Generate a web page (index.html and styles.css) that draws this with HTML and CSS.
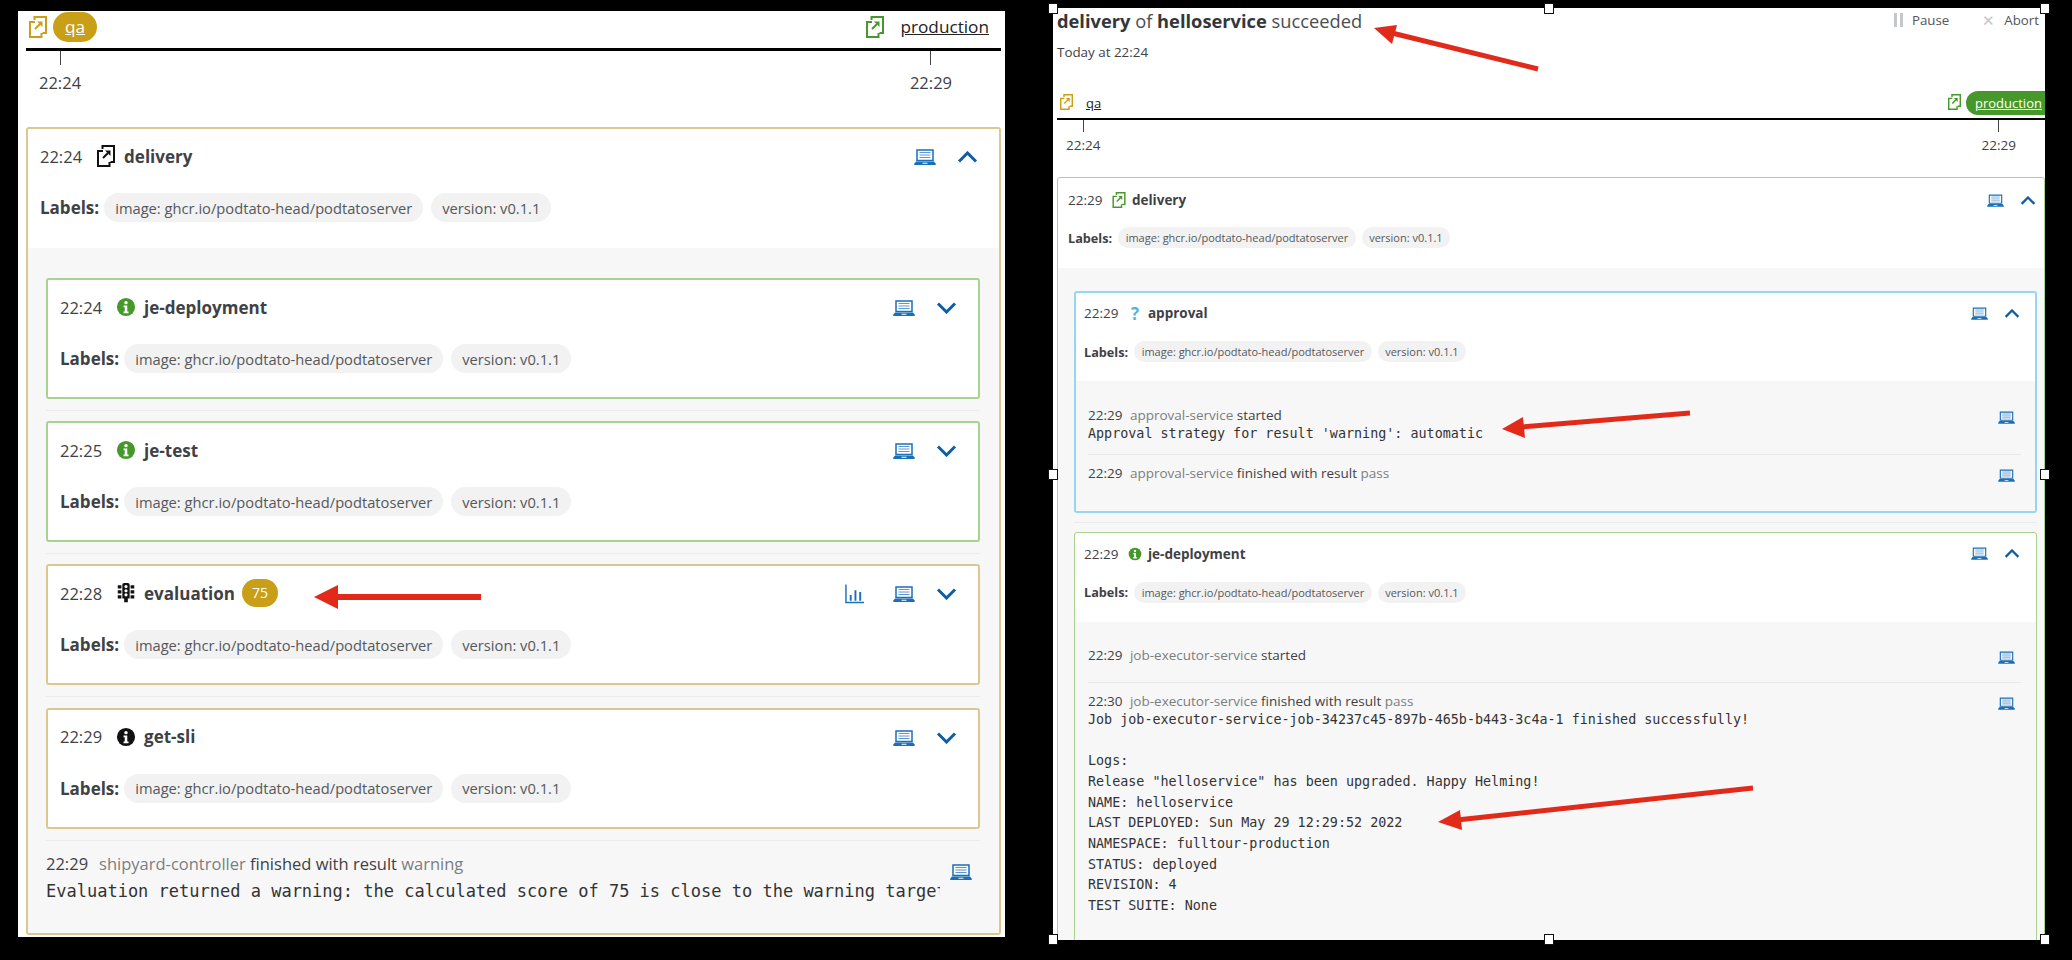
FILE: index.html
```html
<!DOCTYPE html>
<html lang="en">
<head>
    <meta charset="UTF-8">
    <title>Sequence comparison</title>
    <link rel="stylesheet" href="styles.css">
</head>
<body>
    <svg class="defs" width="0" height="0">
        <symbol id="i-deploy" viewBox="0 0 18 22">
            <path d="M5.500 4V1H17v16h-3.500M6 6H1v15h11.500v-4M6 13L11 8" fill="none" stroke="currentColor" stroke-width="2"/>
            <path d="M8 5.500h5.500V11z" fill="currentColor"/>
        </symbol>
        <symbol id="i-info" viewBox="-1 -1 22 22">
            <circle cx="10" cy="10" r="10" fill="currentColor"/>
            <circle cx="10" cy="5.200" r="1.900" fill="#fff"/>
            <path d="M7.300 8.300h4.100v6.600h1.400v2H7.300v-2h1.300v-4.600H7.300z" fill="#fff"/>
        </symbol>
        <symbol id="i-traffic" viewBox="-1 -1 20 24">
            <path d="M5 2a2 2 0 0 1 2-2h4a2 2 0 0 1 2 2v15h-2v4H7v-4H5zM0 2.500h4v3.500H0zM14 2.500h4v3.500h-4zM0 8h4v3.500H0zM14 8h4v3.500h-4zM0 13.500h4V17H0zM14 13.500h4V17h-4z" fill="currentColor"/>
            <circle cx="9" cy="4" r="1.700" fill="#fff"/>
            <circle cx="9" cy="8.500" r="1.700" fill="#fff"/>
            <circle cx="9" cy="13" r="1.700" fill="#fff"/>
        </symbol>
        <symbol id="i-laptop" viewBox="0 0 22 16">
            <path d="M3 1h16v10.500H3z" fill="none" stroke="currentColor" stroke-width="1.500"/>
            <path d="M5.500 3.500h11M5.500 6h11M5.500 8.500h11" stroke="currentColor" stroke-width="1" opacity=".7"/>
            <path d="M2 12.500h18l2 2.500a1 1 0 0 1-1 1H1a1 1 0 0 1-1-1zM8.500 13.800v.9h5v-.9z" fill="currentColor" fill-rule="evenodd"/>
        </symbol>
        <symbol id="i-chart" viewBox="0 0 20 20">
            <path d="M1 0v19h19" fill="none" stroke="currentColor" stroke-width="1.500"/>
            <path d="M5 11h2v6H5zM10 6h2v11h-2zM15 8h2v9h-2z" fill="currentColor"/>
        </symbol>
        <symbol id="i-up" viewBox="0 0 21 12">
            <path d="M2 10.500L10.500 2L19 10.500" fill="none" stroke="currentColor" stroke-width="3"/>
        </symbol>
        <symbol id="i-down" viewBox="0 0 21 12">
            <path d="M2 1.500L10.500 10L19 1.500" fill="none" stroke="currentColor" stroke-width="3"/>
        </symbol>
    </svg>

    <div class="panel left">
        <div class="timeline">
            <div class="stages">
                <div class="stage">
                    <svg class="stage-icon warn"><use href="#i-deploy"/></svg>
                    <a class="stage-name badge-warn">qa</a>
                </div>
                <div class="stage">
                    <svg class="stage-icon ok"><use href="#i-deploy"/></svg>
                    <a class="stage-name">production</a>
                </div>
            </div>
            <div class="ticks">
                <div class="tick"><i></i><span>22:24</span></div>
                <div class="tick"><i></i><span>22:29</span></div>
            </div>
        </div>

        <div class="card outer border-warn">
            <div class="card-head">
                <div class="head-row">
                    <span class="time">22:24</span>
                    <svg class="task-icon"><use href="#i-deploy"/></svg>
                    <b class="task">delivery</b>
                    <div class="actions">
                        <svg class="laptop"><use href="#i-laptop"/></svg>
                        <svg class="chevron"><use href="#i-up"/></svg>
                    </div>
                </div>
                <div class="labels">
                    <b>Labels:</b>
                    <span class="chip">image: ghcr.io/podtato-head/podtatoserver</span>
                    <span class="chip">version: v0.1.1</span>
                </div>
            </div>
            <div class="card-body">
                <div class="item">
                    <div class="card border-ok">
                        <div class="card-head">
                            <div class="head-row">
                                <span class="time">22:24</span>
                                <svg class="task-icon ok"><use href="#i-info"/></svg>
                                <b class="task">je-deployment</b>
                                <div class="actions">
                                    <svg class="laptop"><use href="#i-laptop"/></svg>
                                    <svg class="chevron"><use href="#i-down"/></svg>
                                </div>
                            </div>
                            <div class="labels">
                                <b>Labels:</b>
                                <span class="chip">image: ghcr.io/podtato-head/podtatoserver</span>
                                <span class="chip">version: v0.1.1</span>
                            </div>
                        </div>
                    </div>
                </div>
                <div class="item">
                    <div class="card border-ok">
                        <div class="card-head">
                            <div class="head-row">
                                <span class="time">22:25</span>
                                <svg class="task-icon ok"><use href="#i-info"/></svg>
                                <b class="task">je-test</b>
                                <div class="actions">
                                    <svg class="laptop"><use href="#i-laptop"/></svg>
                                    <svg class="chevron"><use href="#i-down"/></svg>
                                </div>
                            </div>
                            <div class="labels">
                                <b>Labels:</b>
                                <span class="chip">image: ghcr.io/podtato-head/podtatoserver</span>
                                <span class="chip">version: v0.1.1</span>
                            </div>
                        </div>
                    </div>
                </div>
                <div class="item">
                    <div class="card border-warn">
                        <div class="card-head">
                            <div class="head-row">
                                <span class="time">22:28</span>
                                <svg class="task-icon"><use href="#i-traffic"/></svg>
                                <b class="task">evaluation</b>
                                <span class="score">75</span>
                                <div class="actions">
                                    <svg class="chart"><use href="#i-chart"/></svg>
                                    <svg class="laptop"><use href="#i-laptop"/></svg>
                                    <svg class="chevron"><use href="#i-down"/></svg>
                                </div>
                            </div>
                            <div class="labels">
                                <b>Labels:</b>
                                <span class="chip">image: ghcr.io/podtato-head/podtatoserver</span>
                                <span class="chip">version: v0.1.1</span>
                            </div>
                        </div>
                    </div>
                </div>
                <div class="item">
                    <div class="card border-warn">
                        <div class="card-head">
                            <div class="head-row">
                                <span class="time">22:29</span>
                                <svg class="task-icon"><use href="#i-info"/></svg>
                                <b class="task">get-sli</b>
                                <div class="actions">
                                    <svg class="laptop"><use href="#i-laptop"/></svg>
                                    <svg class="chevron"><use href="#i-down"/></svg>
                                </div>
                            </div>
                            <div class="labels">
                                <b>Labels:</b>
                                <span class="chip">image: ghcr.io/podtato-head/podtatoserver</span>
                                <span class="chip">version: v0.1.1</span>
                            </div>
                        </div>
                    </div>
                </div>
                <div class="log">
                    <div class="log-text">
                        <div class="log-line"><span class="time">22:29</span><span class="svc">shipyard-controller</span> finished with result <span class="svc-result">warning</span></div>
                        <pre>Evaluation returned a warning: the calculated score of 75 is close to the warning target score</pre>
                    </div>
                    <svg class="laptop"><use href="#i-laptop"/></svg>
                </div>
            </div>
        </div>
    </div>

    <div class="panel right">
        <div class="title-row">
            <div class="title"><b>delivery</b> of <b>helloservice</b> succeeded</div>
            <div class="controls">
                <span class="control"><i class="pause"></i>Pause</span>
                <span class="control"><i class="abort">✕</i>Abort</span>
            </div>
        </div>
        <div class="subtitle">Today at 22:24</div>

        <div class="timeline">
            <div class="stages">
                <div class="stage">
                    <svg class="stage-icon warn"><use href="#i-deploy"/></svg>
                    <a class="stage-name">qa</a>
                </div>
                <div class="stage">
                    <svg class="stage-icon ok"><use href="#i-deploy"/></svg>
                    <a class="stage-name badge-ok">production</a>
                </div>
            </div>
            <div class="ticks">
                <div class="tick"><i></i><span>22:24</span></div>
                <div class="tick"><i></i><span>22:29</span></div>
            </div>
        </div>

        <div class="card outer border-ok">
            <div class="card-head">
                <div class="head-row">
                    <span class="time">22:29</span>
                    <svg class="task-icon ok"><use href="#i-deploy"/></svg>
                    <b class="task">delivery</b>
                    <div class="actions">
                        <svg class="laptop"><use href="#i-laptop"/></svg>
                        <svg class="chevron"><use href="#i-up"/></svg>
                    </div>
                </div>
                <div class="labels">
                    <b>Labels:</b>
                    <span class="chip">image: ghcr.io/podtato-head/podtatoserver</span>
                    <span class="chip">version: v0.1.1</span>
                </div>
            </div>
            <div class="card-body">
                <div class="item">
                    <div class="card border-info">
                        <div class="card-head">
                            <div class="head-row">
                                <span class="time">22:29</span>
                                <span class="question">?</span>
                                <b class="task">approval</b>
                                <div class="actions">
                                    <svg class="laptop"><use href="#i-laptop"/></svg>
                                    <svg class="chevron"><use href="#i-up"/></svg>
                                </div>
                            </div>
                            <div class="labels">
                                <b>Labels:</b>
                                <span class="chip">image: ghcr.io/podtato-head/podtatoserver</span>
                                <span class="chip">version: v0.1.1</span>
                            </div>
                        </div>
                        <div class="events approval-events">
                            <div class="log">
                                <div class="log-text">
                                    <div class="log-line"><span class="time">22:29</span><span class="svc">approval-service</span> started</div>
                                    <pre>Approval strategy for result 'warning': automatic</pre>
                                </div>
                                <svg class="laptop"><use href="#i-laptop"/></svg>
                            </div>
                            <div class="log">
                                <div class="log-text">
                                    <div class="log-line"><span class="time">22:29</span><span class="svc">approval-service</span> finished with result <span class="svc-result">pass</span></div>
                                </div>
                                <svg class="laptop"><use href="#i-laptop"/></svg>
                            </div>
                        </div>
                    </div>
                </div>
                <div class="item">
                    <div class="card border-ok">
                        <div class="card-head">
                            <div class="head-row">
                                <span class="time">22:29</span>
                                <svg class="task-icon ok"><use href="#i-info"/></svg>
                                <b class="task">je-deployment</b>
                                <div class="actions">
                                    <svg class="laptop"><use href="#i-laptop"/></svg>
                                    <svg class="chevron"><use href="#i-up"/></svg>
                                </div>
                            </div>
                            <div class="labels">
                                <b>Labels:</b>
                                <span class="chip">image: ghcr.io/podtato-head/podtatoserver</span>
                                <span class="chip">version: v0.1.1</span>
                            </div>
                        </div>
                        <div class="events job-events">
                            <div class="log">
                                <div class="log-text">
                                    <div class="log-line"><span class="time">22:29</span><span class="svc">job-executor-service</span> started</div>
                                </div>
                                <svg class="laptop"><use href="#i-laptop"/></svg>
                            </div>
                            <div class="log">
                                <div class="log-text">
                                    <div class="log-line"><span class="time">22:30</span><span class="svc">job-executor-service</span> finished with result <span class="svc-result">pass</span></div>
<pre>Job job-executor-service-job-34237c45-897b-465b-b443-3c4a-1 finished successfully!

Logs:
Release "helloservice" has been upgraded. Happy Helming!
NAME: helloservice
LAST DEPLOYED: Sun May 29 12:29:52 2022
NAMESPACE: fulltour-production
STATUS: deployed
REVISION: 4
TEST SUITE: None</pre>
                                </div>
                                <svg class="laptop"><use href="#i-laptop"/></svg>
                            </div>
                        </div>
                    </div>
                </div>
            </div>
        </div>
    </div>

    <!-- selection handles around the right screenshot -->
    <i class="handle h-tl"></i><i class="handle h-tc"></i><i class="handle h-tr"></i>
    <i class="handle h-ml"></i><i class="handle h-mr"></i>
    <i class="handle h-bl"></i><i class="handle h-bc"></i><i class="handle h-br"></i>

    <!-- red annotation arrows -->
    <svg class="arrows" width="2072" height="960" viewBox="0 0 2072 960">
        <g stroke="#e12a19" stroke-width="6" fill="#e12a19">
            <path d="M335 597H481"/>
            <path d="M1392 33L1538 69" stroke-width="5"/>
            <path d="M1522 427L1690 413" stroke-width="5"/>
            <path d="M1457 820L1753 788" stroke-width="5"/>
        </g>
        <g fill="#e12a19">
            <path d="M314 597L338 585V609z"/>
            <path d="M1374 28L1397 25L1392 44z"/>
            <path d="M1502 429L1523 417L1525 438z"/>
            <path d="M1438 822L1460 810L1462 830z"/>
        </g>
    </svg>
</body>
</html>
```

FILE: styles.css
```css
* {
    box-sizing: border-box;
}

html, body {
    height: 960px;
}

body {
    margin: 0;
    background-color: #000;
    color: #3e4145;
    font-family: "Open Sans", "Noto Sans", sans-serif;
    display: flex;
    align-items: flex-start;
    overflow: hidden;
    position: relative;
}

.defs {
    position: absolute;
}

.panel {
    background-color: #fff;
    overflow: hidden;
    flex: none;
}

.left {
    width: 987px;
    height: 926px;
    margin: 11px 0 0 18px;
    font-size: 16.5px;
}

.right {
    width: 992px;
    height: 932px;
    margin: 8px 0 0 48px;
    font-size: 13.5px;
}

/* title block */
.title-row {
    display: flex;
    justify-content: space-between;
    padding: 0 6px 0 4px;
    height: 25px;
    align-items: center;
}

.title {
    font-size: 18.3px;
    color: #4a4d50;
}

.title b {
    color: #34373a;
}

.controls {
    display: flex;
    gap: 33px;
    font-size: 13.3px;
    color: #555;
    margin-bottom: 2px;
}

.control {
    display: flex;
    align-items: center;
}

.control i {
    font-style: normal;
    color: #c4c6c8;
    margin-right: 9px;
}

.pause {
    width: 9px;
    height: 14px;
    border-left: 3px solid #c4c6c8;
    border-right: 3px solid #c4c6c8;
}

.abort {
    font-size: 15px;
}

.subtitle {
    padding-left: 4px;
    margin-top: 10px;
    font-size: 13.4px;
    line-height: 18px;
}

/* stage timeline */
.timeline {
    margin: 0 4px 0 8px;
}

.right .timeline {
    margin: 30px 0 0 4px;
}

.stages {
    display: flex;
    justify-content: space-between;
    border-bottom: 3px solid #000;
}

.left .stages {
    height: 40px;
    padding: 1px 0 0 3px;
}

.right .stages {
    height: 29px;
    padding-left: 3px;
    border-bottom-width: 2px;
}

.stage {
    display: flex;
    align-items: flex-start;
}

.left .stage {
    gap: 6px;
}

.left .stage:last-child {
    gap: 4px;
}

.right .stage {
    gap: 5px;
}

.stage-icon {
    flex: none;
}

.left .stage-icon {
    width: 18px;
    height: 22px;
    margin-top: 4px;
}

.right .stage-icon {
    width: 13px;
    height: 16px;
    margin-top: 3px;
}

.warn {
    color: #c99f17;
}

.ok {
    color: #46982b;
}

.stage-name {
    text-decoration: underline;
    color: #222;
    border-radius: 16px;
}

.left .stage-name {
    padding: 0 12px;
    line-height: 30px;
    font-size: 17.2px;
}

.right .stage-name {
    padding: 0 9px;
    line-height: 24px;
    font-size: 13px;
}

.right .stage:first-child .stage-name {
    padding-left: 8px;
}

.stage-name.badge-warn {
    background-color: #c99f17;
    color: #fff;
}

.stage-name.badge-ok {
    background-color: #46982b;
    color: #fff;
    border-radius: 16px 0 0 16px;
    width: 79px;
}

.ticks {
    display: flex;
    justify-content: space-between;
}

.left .ticks {
    padding: 0 49px 0 13px;
}

.right .ticks {
    padding: 0 29px 0 9px;
}

.tick {
    display: flex;
    flex-direction: column;
    align-items: center;
}

.tick i {
    width: 1px;
    background-color: #444;
}

.left .tick i {
    height: 14px;
    margin-bottom: 7px;
}

.right .tick i {
    height: 12px;
    margin-bottom: 4px;
}

.left .tick span {
    line-height: 22px;
}

.right .tick span {
    line-height: 18px;
}

/* cards */
.card {
    background-color: #fff;
    border: 2px solid;
    border-radius: 3px;
}

.border-warn {
    border-color: #dcc88f;
}

.border-ok {
    border-color: #a9d28f;
}

.border-info {
    border-color: #97d6f2;
}

.left .outer {
    margin: 33px 4px 0 8px;
    height: 808px;
}

.right .outer {
    margin: 23px 0 0 4px;
    border-width: 1px;
}

.head-row {
    display: flex;
    align-items: center;
}

.left .card-head {
    padding: 15px 21px 24px 12px;
}

.left .outer > .card-head {
    padding-bottom: 26px;
}

.right .card-head {
    padding: 10px 15px 19px 8px;
}

.right .outer > .card-head {
    padding: 12px 8px 20px 10px;
}

.right .item .border-ok {
    border-width: 1px;
}

.right .item .border-ok > .card-head {
    padding: 11px 16px 19px 9px;
}

.left .head-row {
    height: 24px;
}

.left .actions {
    margin-top: 2px;
}

.right .head-row {
    height: 20px;
}

.left .time {
    margin-right: 14px;
}

.right .time {
    margin-right: 9.5px;
}

.left .log .time {
    margin-right: 11px;
}

.right .log .time {
    margin-right: 7.5px;
}

.task-icon {
    flex: none;
    color: #111;
}

.task-icon.ok {
    color: #46982b;
}

.left .task-icon {
    width: 20px;
    height: 22px;
    margin-right: 8px;
}

.right .task-icon {
    width: 14px;
    height: 16px;
    margin-right: 6px;
}

.question {
    color: #4bb8e2;
    font-weight: 700;
    font-size: 17px;
    width: 14px;
    margin-right: 6px;
    text-align: center;
}

.task {
    font-weight: 700;
}

.left .task {
    font-size: 17px;
}

.score {
    background-color: #c99f17;
    color: #fff;
    border-radius: 14px;
    font-size: 14px;
    line-height: 28px;
    padding: 0 10px;
    margin-left: 7px;
}

.actions {
    margin-left: auto;
    display: flex;
    align-items: center;
}

.laptop {
    flex: none;
    color: #1a6fbb;
}

.left .laptop {
    width: 22px;
    height: 16px;
}

.right .laptop {
    width: 17px;
    height: 13px;
}

.chevron {
    flex: none;
    color: #0f5ea5;
}

.left .chevron {
    width: 21px;
    height: 12px;
    margin-left: 21px;
}

.right .chevron {
    width: 16px;
    height: 9px;
    margin-left: 16px;
}

.chart {
    flex: none;
    width: 19px;
    height: 20px;
    color: #1a6fbb;
    margin-right: 29px;
}

/* labels */
.labels {
    display: flex;
    align-items: center;
}

.left .labels {
    margin-top: 25px;
    height: 29px;
    font-size: 17px;
    gap: 8px;
}

.left .labels b {
    margin-right: -3px;
}

.right .labels {
    margin-top: 18px;
    height: 21px;
    font-size: 12.7px;
    gap: 6px;
}

.right .outer > .card-head .labels {
    margin-top: 17px;
}

.chip {
    background-color: #f2f2f2;
    color: #55585b;
    border-radius: 15px;
    height: 100%;
    display: flex;
    align-items: center;
}

.left .chip {
    padding: 0 11px;
    font-size: 14.7px;
}

.right .chip {
    padding: 0 7.5px;
    font-size: 11px;
}

/* body and events */
.card-body,
.events {
    background-color: #f7f7f7;
}

.left .card-body {
    padding: 30px 19px 0 18px;
    height: 685px;
}

.right .card-body {
    padding: 23px 7px 0 16px;
}

.left .item {
    padding-bottom: 11px;
    margin-bottom: 10.2px;
    border-bottom: 1px solid #ececec;
}

.left .item .card {
    height: 121px;
}

.right .item {
    padding-bottom: 9px;
    margin-bottom: 9px;
    border-bottom: 1px solid #ececec;
}

.log {
    display: flex;
    justify-content: space-between;
    align-items: flex-start;
}

.log-line {
    white-space: nowrap;
}

.svc,
.svc-result {
    color: #7b7e81;
}

.left .log-line {
    line-height: 22px;
}

.right .log-line {
    line-height: 18px;
}

.left .log-text {
    width: 894px;
    overflow: hidden;
}

.left .log {
    padding-top: 2px;
}

.left .log .laptop {
    margin: 11px 8px 0 0;
}

pre {
    margin: 0;
    font-family: "DejaVu Sans Mono", "Liberation Mono", monospace;
    color: #333;
}

.left pre {
    font-size: 17px;
    line-height: 22px;
    margin-top: 5px;
    white-space: nowrap;
}

.right pre {
    font-size: 13.4px;
    line-height: 20.7px;
}

.events {
    padding: 0 14px 0 12px;
}

.events .log + .log {
    border-top: 1px solid #e8e8e8;
    padding-top: 9px;
}

.right .events .laptop {
    margin: 5px 6px 0 0;
}

.approval-events {
    padding-top: 25px;
    padding-bottom: 29px;
}

.approval-events .log:first-child {
    padding-bottom: 9px;
}

.job-events {
    padding: 24px 15px 40px 13px;
}

.job-events .log:first-child {
    padding-bottom: 18px;
}

/* overlays */
.handle {
    position: absolute;
    width: 10px;
    height: 11px;
    margin: -5px 0 0 -5px;
    background-color: #fff;
    border: 1px solid #111;
}

.h-tl { left: 1053px; top: 8px; }
.h-tc { left: 1549px; top: 8px; }
.h-tr { left: 2045px; top: 8px; }
.h-ml { left: 1053px; top: 474px; }
.h-mr { left: 2045px; top: 474px; }
.h-bl { left: 1053px; top: 939px; }
.h-bc { left: 1549px; top: 939px; }
.h-br { left: 2045px; top: 939px; }

.arrows {
    position: absolute;
    left: 0;
    top: 0;
    pointer-events: none;
}
```
